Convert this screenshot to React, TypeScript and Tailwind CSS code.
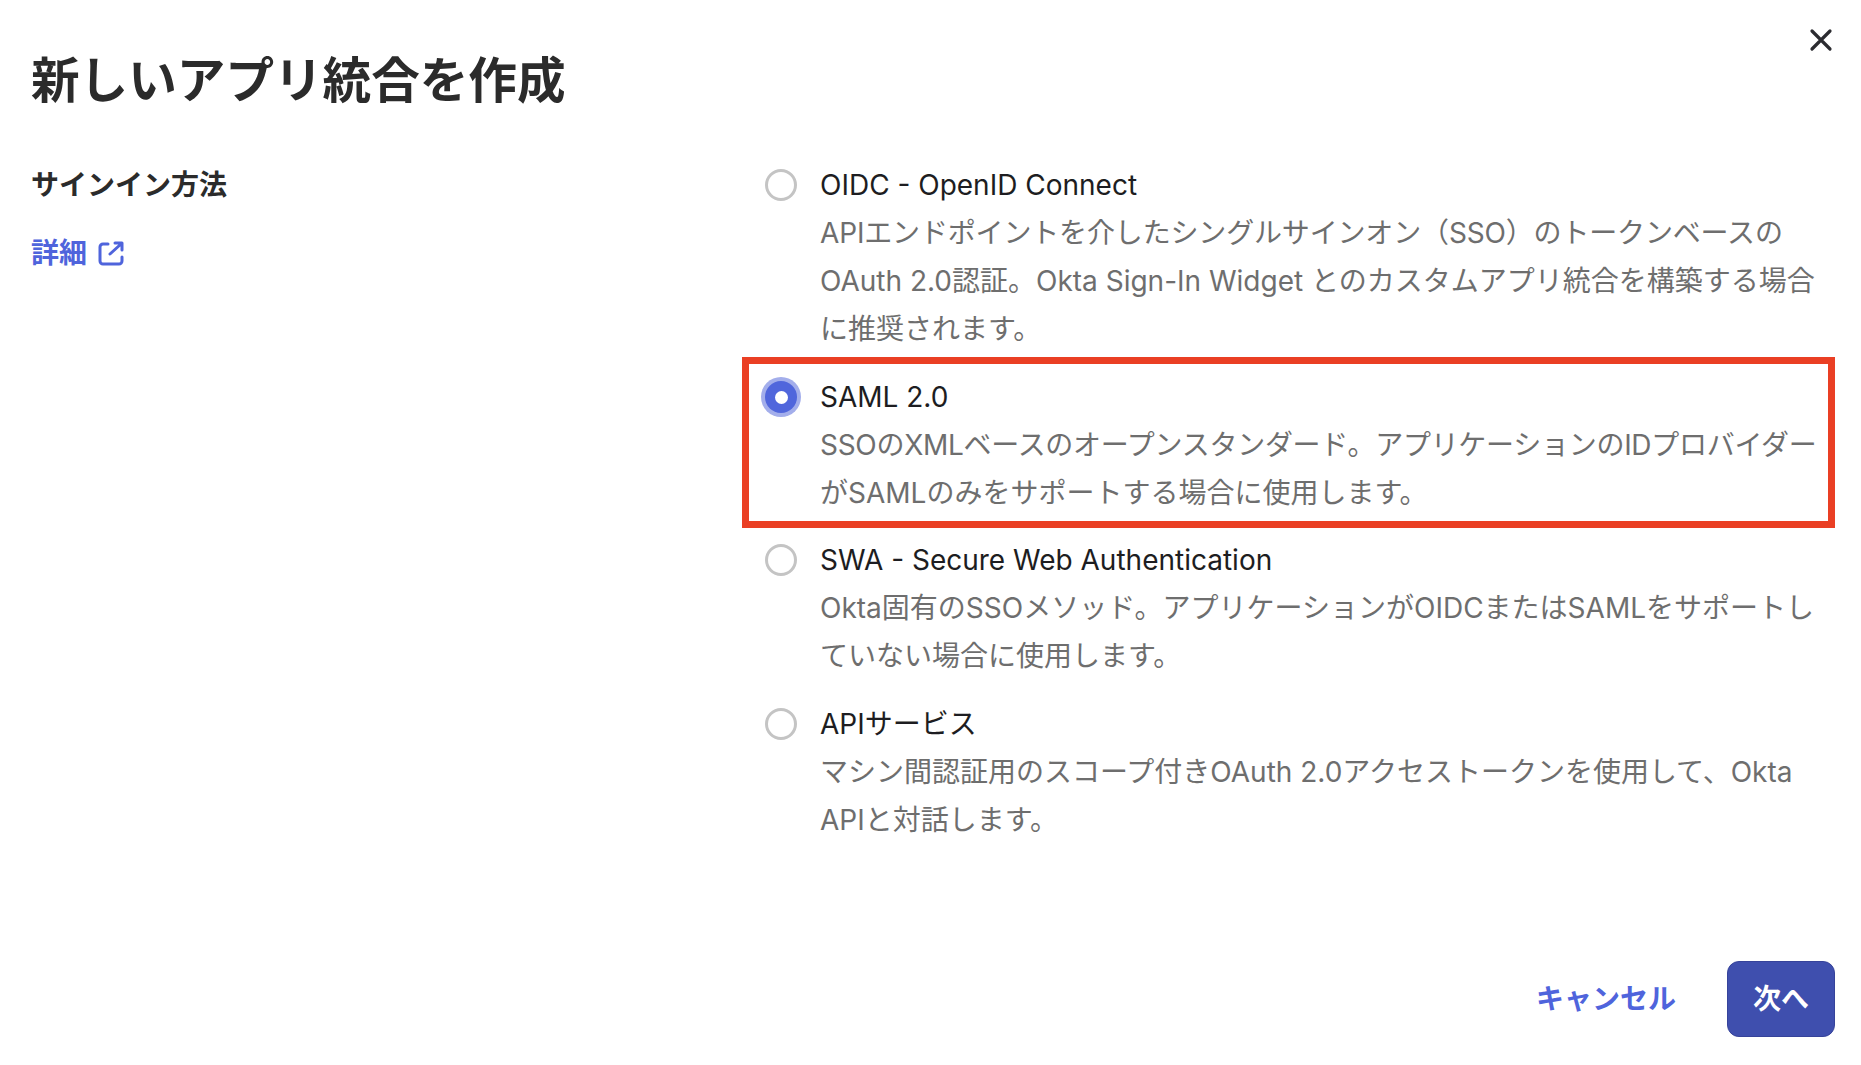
const jp = "font-['Inter','Noto_Sans_CJK_JP',sans-serif]"

// kana in the original sets slightly tighter on the two longest lines
const options = [
  {
    name: 'OIDC - OpenID Connect',
    lines: [
      { text: 'APIエンドポイントを介したシングルサインオン（SSO）のトークンベースの', tracking: 'tracking-[-0.16px]' },
      { text: 'OAuth 2.0認証。Okta Sign-In Widget とのカスタムアプリ統合を構築する場合' },
      { text: 'に推奨されます。' },
    ],
  },
  {
    name: 'SAML 2.0',
    selected: true,
    lines: [
      { text: 'SSOのXMLベースのオープンスタンダード。アプリケーションのIDプロバイダー', tracking: 'tracking-[-0.28px]' },
      { text: 'がSAMLのみをサポートする場合に使用します。' },
    ],
  },
  {
    name: 'SWA - Secure Web Authentication',
    lines: [
      { text: 'Okta固有のSSOメソッド。アプリケーションがOIDCまたはSAMLをサポートし' },
      { text: 'ていない場合に使用します。' },
    ],
  },
  {
    name: 'APIサービス',
    lines: [
      { text: 'マシン間認証用のスコープ付きOAuth 2.0アクセストークンを使用して、Okta' },
      { text: 'APIと対話します。' },
    ],
  },
]

type Line = { text: string; tracking?: string }

function Option({ name, lines, selected }: { name: string; lines: Line[]; selected?: boolean }) {
  return (
    <div className={selected ? 'flex gap-[23px] pl-[16px]' : 'flex gap-[23px] pl-[23px]'}>
      {selected ? (
        <div className="mt-[8px] flex h-[32px] w-[32px] shrink-0 items-center justify-center rounded-full bg-[#5066dc] ring-[4px] ring-[#a3aeeb]">
          <div className="h-[13px] w-[13px] rounded-full bg-white" />
        </div>
      ) : (
        <div className="mt-[8px] h-[32px] w-[32px] shrink-0 rounded-full border-[3px] border-[#c4c4c4] bg-white" />
      )}
      <div>
        <div className="text-[28px] leading-[48px] text-[#1d1d21]">{name}</div>
        {lines.map((l) => (
          <div key={l.text} className={`whitespace-nowrap text-[28px] leading-[48px] text-[#6e6e6e] ${l.tracking ?? ''}`}>
            {l.text}
          </div>
        ))}
      </div>
    </div>
  )
}

export default function App() {
  return (
    <div className={`${jp} relative h-[1065px] w-[1861px] overflow-hidden bg-white`}>
      <button className="absolute right-[27px] top-[27px] text-[#2b2b30]">
        <svg width="26" height="26" viewBox="0 0 26 26" fill="none" stroke="currentColor" strokeWidth="3.2" strokeLinecap="round">
          <path d="M4 4l18 18M22 4L4 22" />
        </svg>
      </button>

      <div className="flex flex-col pl-[31px] pr-[26px]">
        <h1 className="pt-[48px] text-[48.6px] font-bold leading-[66px] text-[#2b2b2b]">新しいアプリ統合を作成</h1>

        <div className="mt-[47px] flex">
          <div className="w-[711px] shrink-0">
            <div className="text-[28px] font-bold leading-[48px] text-[#2b2b2b]">サインイン方法</div>
            <a className="mt-[20px] flex items-center gap-[11px] text-[28px] font-semibold leading-[48px] text-[#4f64dc]">
              詳細
              <svg width="26" height="26" viewBox="0 0 26 26" fill="none" stroke="currentColor" strokeWidth="3" strokeLinecap="round" strokeLinejoin="round">
                <path d="M10 4H5a3 3 0 0 0-3 3v14a3 3 0 0 0 3 3h16a3 3 0 0 0 3-3v-4" />
                <path d="M12 14L23 4M17 3h7v7" />
              </svg>
            </a>
          </div>

          <div className="flex w-[1093px] flex-col">
            <Option {...options[0]} />
            <div className="mt-[4px] border-[7px] border-[#ea3f24] pb-[4px] pt-[9px]">
              <Option {...options[1]} />
            </div>
            <div className="mt-[8px]">
              <Option {...options[2]} />
            </div>
            <div className="mt-[20px]">
              <Option {...options[3]} />
            </div>
          </div>
        </div>
      </div>

      <div className="absolute bottom-[28px] right-[26px] flex items-center gap-[51px]">
        <span className="text-[28px] font-semibold text-[#4f64dc]">キャンセル</span>
        <button className="flex h-[76px] w-[108px] items-center justify-center rounded-[12px] border border-[#36439a] bg-[#3f4fae] text-[28px] font-semibold text-white">
          次へ
        </button>
      </div>
    </div>
  )
}
